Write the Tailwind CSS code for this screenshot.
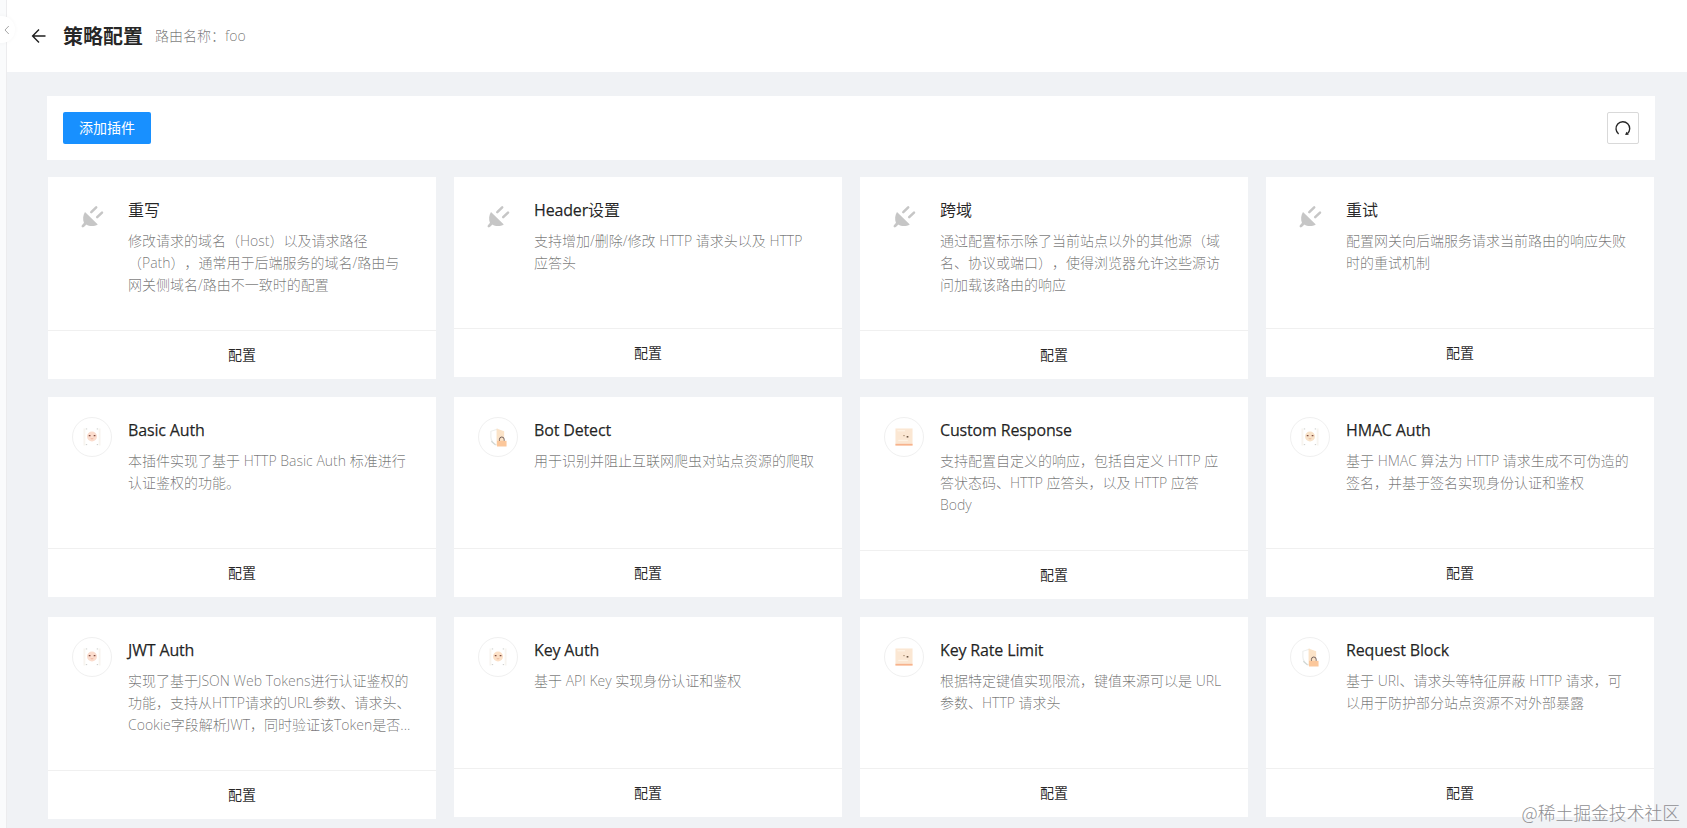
<!DOCTYPE html>
<html lang="zh-CN">
<head>
  <meta charset="UTF-8" />
  <meta name="viewport" content="width=device-width, initial-scale=1.0"/>
  <title>策略配置</title>
  <script src="https://cdn.jsdelivr.net/npm/@tailwindcss/browser@4"></script>
</head>
<body class="relative flex h-screen overflow-hidden bg-[#f0f2f5] font-['Open_Sans','Noto_Sans_CJK_SC',sans-serif] text-sm text-black/85 [text-spacing-trim:space-all]">

  <svg class="hidden">
    <symbol id="plug" viewBox="0 0 40 40">
      <path d="M13 15 25.800 27.400C22.500 29.600 17.600 29.700 14.300 27.600L11.600 30 10 28.500 12 26C10.500 22.600 11 18 13 15Z" fill="#c6c6c6"/>
      <path d="m10.800 29.200 3-3M19.300 15.200 24.200 10.400M25.200 20.200 30 15.600" fill="none" stroke="#c6c6c6" stroke-width="2.500" stroke-linecap="round"/>
    </symbol>
    <symbol id="face" viewBox="0 0 40 40">
      <path d="M12 11v18M28 11v18" stroke="#f8f5f0" stroke-width="2"/>
      <path d="M13.500 11.500h1.400M25 11.500h1.400M13.500 28h1.400M25 28h1.400" stroke="#c9cbc9" stroke-width="1"/>
      <circle cx="20" cy="19.500" r="5.200" fill="currentColor"/>
      <path d="M16.600 18.600h1.800M21.800 18.600h1.800" stroke="#7d4a40" stroke-width="1.400"/>
      <path d="M18.600 21.400q1.400 1.400 2.800 0" stroke="#e5a58c" stroke-width=".7" fill="none"/>
    </symbol>
    <symbol id="shield" viewBox="0 0 40 40">
      <path d="M20 11.500 12.500 14v6c0 4 3 7 7.500 9" fill="none" stroke="#eceeec" stroke-width="1.200"/>
      <path d="m13 24.500 4.500 4" stroke="#cfd6d4" stroke-width="1.200"/>
      <path d="m18.500 11 8 3v9l-4 6h-4Z" fill="#fbe3c8"/>
      <path d="M19 24h10v6H19Z" fill="#fbc79b"/>
      <path d="M21.500 24v-1.500a2.500 2.500 0 0 1 5 0V24" fill="none" stroke="#6b5a56" stroke-width="1"/>
    </symbol>
    <symbol id="page" viewBox="0 0 40 40">
      <path d="M11 11h18v18H11Z" fill="#fbe7d3"/>
      <path d="M11 27.200h18v1.800H11Z" fill="#f7b28c"/>
      <path d="M13 13.500h8M14 23.500h10" stroke="#fff6ea" stroke-width="1"/>
      <path d="M19 18.600h2" stroke="#b59a80" stroke-width="1"/>
      <path d="M22.800 19.800h1.800" stroke="#5b4636" stroke-width="1.500"/>
    </symbol>
  </svg>

  <aside class="w-[7px] shrink-0 border-r border-[#ececee] bg-[#fafbfc]"></aside>
  <div class="absolute -left-3 top-4 flex h-[27px] w-[27px] items-center justify-end rounded-full bg-white pr-[5px] shadow-[0_0_4px_rgba(0,0,0,0.04)]">
    <svg class="h-2.5 w-1.5" viewBox="0 0 6 10" fill="none" stroke="#a8a8a8" stroke-width="1"><path d="M4.800 1 1 5l3.800 4"/></svg>
  </div>

  <div class="min-w-0 flex-1">
    <header class="flex h-18 items-center bg-white pl-6">
      <svg class="h-4 w-4" viewBox="0 0 16 16" fill="none" stroke="#1f1f1f" stroke-width="1.400"><path d="M14.500 8H2M8 1.600 1.600 8 8 14.400"/></svg>
      <h1 class="ml-4 pt-0.5 text-xl font-semibold leading-8">策略配置</h1>
      <span class="ml-3 font-light text-black/55">路由名称：foo</span>
    </header>

    <main class="px-10 pt-6">
      <div class="flex h-16 w-[1608px] items-center justify-between bg-white px-4">
        <button class="h-8 w-22 rounded-xs bg-[#1890ff] text-white">添加插件</button>
        <button class="flex h-8 w-8 items-center justify-center rounded-xs border border-[#d9d9d9]">
          <svg class="h-4.5 w-4.5 shrink-0" viewBox="0 0 16 16" fill="none" stroke="#262626" stroke-width="1.200">
            <path d="M4.100 13.300A6.100 6.100 0 1 1 11.900 13.100"/>
            <path d="m9.900 14.300 1.100-3 2.200 2.600Z" fill="#262626" stroke="none"/>
          </svg>
        </button>
      </div>
      <div id="grid" class="ml-px mt-[17px] grid w-[1606px] grid-cols-4 items-start gap-[18px]"></div>
    </main>
  </div>

  <div class="absolute bottom-1 right-[7px] font-['Noto_Sans_CJK_SC',sans-serif] text-[17.8px] font-light leading-6 text-[#8f8f93]">@稀土掘金技术社区</div>

  <script>
    const plugins = [
      { icon: "plug", title: "重写", lines: ["修改请求的域名（Host）以及请求路径", "（Path），通常用于后端服务的域名/路由与", "网关侧域名/路由不一致时的配置"] },
      { icon: "plug", title: "Header设置", lines: ["支持增加/删除/修改 HTTP 请求头以及 HTTP", "应答头"] },
      { icon: "plug", title: "跨域", lines: ["通过配置标示除了当前站点以外的其他源（域", "名、协议或端口），使得浏览器允许这些源访", "问加载该路由的响应"] },
      { icon: "plug", title: "重试", lines: ["配置网关向后端服务请求当前路由的响应失败", "时的重试机制"] },
      { icon: "face", title: "Basic Auth", lines: ["本插件实现了基于 HTTP Basic Auth 标准进行", "认证鉴权的功能。"] },
      { icon: "shield", title: "Bot Detect", lines: ["用于识别并阻止互联网爬虫对站点资源的爬取"] },
      { icon: "page", title: "Custom Response", lines: ["支持配置自定义的响应，包括自定义 HTTP 应", "答状态码、HTTP 应答头，以及 HTTP 应答", "Body"] },
      { icon: "face", tone: "text-[#f8e2c8]", title: "HMAC Auth", lines: ["基于 HMAC 算法为 HTTP 请求生成不可伪造的", "签名，并基于签名实现身份认证和鉴权"] },
      { icon: "face", title: "JWT Auth", lines: ["实现了基于JSON Web Tokens进行认证鉴权的", "功能，支持从HTTP请求的URL参数、请求头、", "Cookie字段解析JWT，同时验证该Token是否..."] },
      { icon: "face", tone: "text-[#fce0c6]", title: "Key Auth", lines: ["基于 API Key 实现身份认证和鉴权"] },
      { icon: "page", title: "Key Rate Limit", lines: ["根据特定键值实现限流，键值来源可以是 URL", "参数、HTTP 请求头"] },
      { icon: "shield", title: "Request Block", lines: ["基于 URI、请求头等特征屏蔽 HTTP 请求，可", "以用于防护部分站点资源不对外部暴露"] }
    ];

    document.getElementById("grid").innerHTML = plugins.map(p => {
      const ring = p.icon === "plug" ? "" : "rounded-full border border-[#f0f0f0]";
      const height = p.lines.length > 2 ? "h-[153px]" : "h-[151px]";
      // latin part of a title is set a little heavier than the chinese part
      const title = p.title.replace(/[A-Za-z ]+/, '<span class="tracking-[-0.15px] [-webkit-text-stroke:0.25px_currentColor]">$&</span>');
      return `
        <section class="bg-white">
          <div class="flex ${height} gap-4 px-6 pt-5">
            <div class="h-10 w-10 shrink-0 ${ring} ${p.tone || "text-[#fbdccd]"}">
              <svg class="h-full w-full" viewBox="0 0 40 40"><use href="#${p.icon}"/></svg>
            </div>
            <div class="min-w-0 flex-1 pt-px">
              <h2 class="text-base leading-6">${title}</h2>
              <p class="mt-2 whitespace-nowrap font-light leading-[22px] text-black/55">${p.lines.join("<br>")}</p>
            </div>
          </div>
          <button class="block h-[49px] w-full border-t border-[#f0f0f0]">配置</button>
        </section>`;
    }).join("");
  </script>
</body>
</html>
